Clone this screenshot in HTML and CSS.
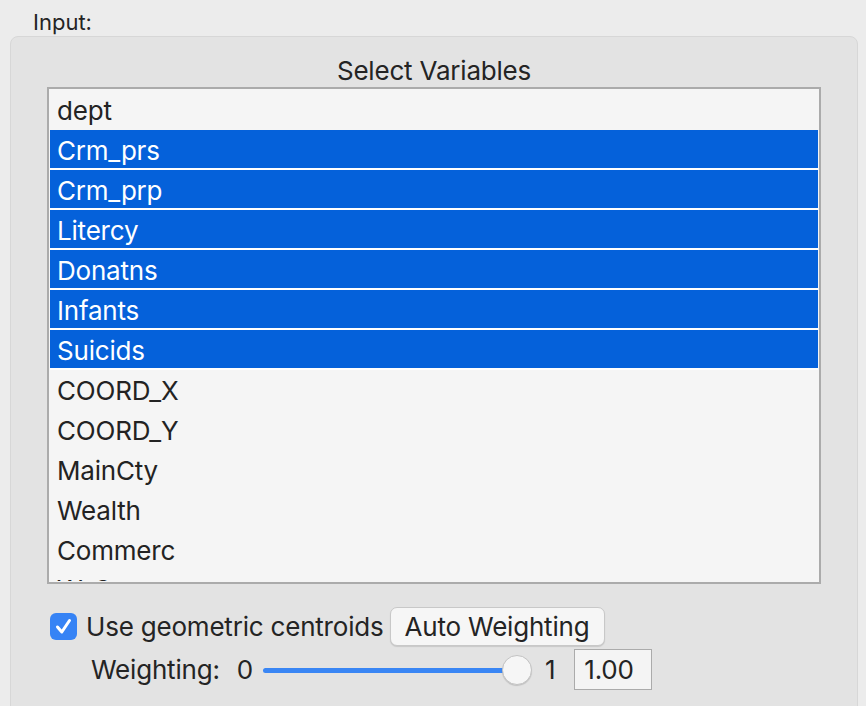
FILE: index.html
```html
<!DOCTYPE html>
<html>
<head>
<meta charset="utf-8">
<link rel="stylesheet" href="styles.css">
</head>
<body>
<div class="input-label">Input:</div>
<div class="panel">
  <div class="title">Select Variables</div>
  <div class="listbox">
    <div class="list">
      <div class="row">dept</div>
      <div class="row sel">Crm_prs</div>
      <div class="row sel">Crm_prp</div>
      <div class="row sel">Litercy</div>
      <div class="row sel">Donatns</div>
      <div class="row sel">Infants</div>
      <div class="row sel">Suicids</div>
      <div class="row">COORD_X</div>
      <div class="row">COORD_Y</div>
      <div class="row">MainCty</div>
      <div class="row">Wealth</div>
      <div class="row">Commerc</div>
      <div class="row">W_Crm_prs</div>
    </div>
  </div>
  <div class="opts">
    <span class="checkbox">
      <svg width="27" height="27" viewBox="0 0 27 27"><path d="M7.5 14 L11.8 19 L19.5 7.5" fill="none" stroke="#fff" stroke-width="3" stroke-linecap="round" stroke-linejoin="round"/></svg>
    </span>
    <span class="cb-label">Use geometric centroids</span>
    <span class="button">Auto Weighting</span>
  </div>
  <div class="weight">
    <span class="w-label">Weighting:</span>
    <span class="w-min">0</span>
    <span class="slider"><span class="thumb"></span></span>
    <span class="w-max">1</span>
    <span class="field">1.00</span>
  </div>
</div>
</body>
</html>
```
FILE: styles.css
```css
html, body {
  margin: 0;
  padding: 0;
  background: #ececec;
  font-family: Inter, "Liberation Sans", sans-serif;
  color: #242424;
  overflow: hidden;
}
.input-label {
  height: 36px;
  box-sizing: border-box;
  padding: 7px 0 0 33px;
  font-size: 22px;
  line-height: 30px;
}
.panel {
  margin: 0 8px 0 10px;
  height: 680px;
  box-sizing: border-box;
  background: #e3e3e3;
  border: 1px solid #d7d7d7;
  border-radius: 8px;
  letter-spacing: -0.2px;
}
.title {
  margin-top: 18px;
  height: 32px;
  line-height: 32px;
  font-size: 26px;
  text-align: center;
}
.listbox {
  margin: 0 36px;
  height: 497px;
  box-sizing: border-box;
  border: 2px solid #ababab;
  padding: 1px;
  background: #f5f5f5;
}
.list {
  height: 491px;
  overflow: hidden;
  background: #f5f5f5;
}
.row {
  height: 40px;
  box-sizing: border-box;
  padding-left: 7px;
  font-size: 26px;
  line-height: 41px;
  color: #232323;
  white-space: nowrap;
}
.row:last-child {
  line-height: 39px;
}
.row.sel {
  background: #0561da;
  color: #fff;
  border-bottom: 2px solid #ffffff;
}
.opts {
  margin-top: 23px;
  height: 39px;
  display: flex;
  align-items: center;
  padding-left: 39px;
  font-size: 26px;
}
.checkbox {
  width: 27px;
  height: 27px;
  border-radius: 6px;
  background: #3683f5;
  display: flex;
}
.cb-label {
  margin-left: 9px;
}
.button {
  margin-left: 6px;
  width: 215px;
  height: 39px;
  box-sizing: border-box;
  border: 1px solid #c8c8c8;
  border-radius: 7px;
  background: #f6f6f6;
  box-shadow: 0 1px 1px rgba(0,0,0,0.12);
  text-align: center;
  line-height: 37px;
}
.weight {
  margin-top: 3px;
  height: 41px;
  display: flex;
  align-items: center;
  padding-left: 80px;
  font-size: 26px;
}
.w-min {
  margin-left: 17px;
}
.slider {
  position: relative;
  margin-left: 10px;
  width: 269px;
  height: 30px;
}
.slider::before {
  content: "";
  position: absolute;
  left: 0;
  right: 15px;
  top: 13px;
  height: 5px;
  border-radius: 3px;
  background: #3a86f4;
}
.thumb {
  position: absolute;
  right: 0;
  top: 0;
  width: 30px;
  height: 30px;
  box-sizing: border-box;
  border-radius: 50%;
  background: #f6f6f6;
  border: 1px solid #c3c3c3;
  box-shadow: 0 1px 1px rgba(0,0,0,0.15);
}
.w-max {
  margin-left: 13px;
}
.field {
  margin-left: 19px;
  width: 78px;
  height: 41px;
  box-sizing: border-box;
  border: 1px solid #ababab;
  background: #f4f4f4;
  padding-left: 9px;
  line-height: 39px;
}
```
